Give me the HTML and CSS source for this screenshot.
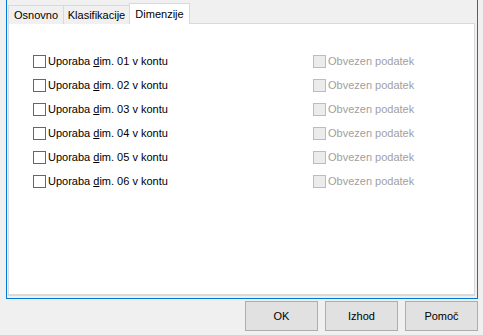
FILE: index.html
```html
<!DOCTYPE html>
<html lang="sl">
<head>
  <meta charset="UTF-8" />
  <title>Dimenzije</title>
  <link rel="stylesheet" href="styles.css">
</head>
<body>
  <div class="frame">
    <div class="tabs">
      <div class="tab tab-osnovno">Osnovno</div>
      <div class="tab tab-klas">Klasifikacije</div>
      <div class="tab tab-dim active">Dimenzije</div>
    </div>
    <div class="panel">
      <div class="rows">
        <label class="check"><span class="box"></span><span>Uporaba <u>d</u>im. 01 v kontu</span></label>
        <label class="check disabled"><span class="box"></span><span>Obvezen podatek</span></label>
        <label class="check"><span class="box"></span><span>Uporaba <u>d</u>im. 02 v kontu</span></label>
        <label class="check disabled"><span class="box"></span><span>Obvezen podatek</span></label>
        <label class="check"><span class="box"></span><span>Uporaba <u>d</u>im. 03 v kontu</span></label>
        <label class="check disabled"><span class="box"></span><span>Obvezen podatek</span></label>
        <label class="check"><span class="box"></span><span>Uporaba <u>d</u>im. 04 v kontu</span></label>
        <label class="check disabled"><span class="box"></span><span>Obvezen podatek</span></label>
        <label class="check"><span class="box"></span><span>Uporaba <u>d</u>im. 05 v kontu</span></label>
        <label class="check disabled"><span class="box"></span><span>Obvezen podatek</span></label>
        <label class="check"><span class="box"></span><span>Uporaba <u>d</u>im. 06 v kontu</span></label>
        <label class="check disabled"><span class="box"></span><span>Obvezen podatek</span></label>
      </div>
    </div>
  </div>
  <div class="buttons">
    <button>OK</button>
    <button>Izhod</button>
    <button>Pomoč</button>
  </div>
</body>
</html>
```

FILE: styles.css
```css
body {
  margin: 0;
  width: 483px;
  height: 335px;
  overflow: hidden;
  background: #f0f0f0;
  font-family: "Liberation Sans", Arial, sans-serif;
  font-size: 11px;
  color: #000;
}
.frame {
  box-sizing: border-box;
  margin-left: 6px;
  width: 472px;
  height: 299px;
  border: 1px solid #0078d7;
  border-top: none;
  padding: 3px 2px 2px 1px;
  display: flex;
  flex-direction: column;
}
.tabs {
  display: flex;
  align-items: flex-end;
  height: 21px;
  margin-bottom: -1px;
  position: relative;
  z-index: 1;
}
.tab {
  box-sizing: border-box;
  height: 19px;
  border: 1px solid #d9d9d9;
  border-bottom: none;
  background: #f0f0f0;
  margin-right: -1px;
  text-align: center;
  line-height: 18px;
}
.tab-osnovno { width: 56px; }
.tab-klas { width: 67px; }
.tab-dim { width: 61px; }
.tab.active {
  height: 21px;
  background: #fff;
  line-height: 20px;
}
.panel {
  flex: 1;
  background: #fff;
  border: 1px solid #d9d9d9;
  border-bottom: 2px solid #dadada;
  padding: 25px 0 0 24px;
}
.rows {
  display: grid;
  grid-template-columns: 280px auto;
  grid-auto-rows: 24px;
}
.check {
  display: flex;
  align-items: center;
  gap: 2px;
}
.box {
  box-sizing: border-box;
  width: 13px;
  height: 13px;
  border: 1px solid #666;
  background: #fff;
}
.check.disabled {
  color: #a0a0a0;
}
.check.disabled .box {
  border-color: #bcbcbc;
  background: #ececec;
}
.buttons {
  display: flex;
  justify-content: flex-end;
  gap: 7px;
  padding: 2px 5px 0 0;
}
button {
  box-sizing: border-box;
  width: 73px;
  height: 30px;
  margin: 0;
  border: 1px solid #adadad;
  background: #e1e1e1;
  font: inherit;
  color: #000;
}
```
